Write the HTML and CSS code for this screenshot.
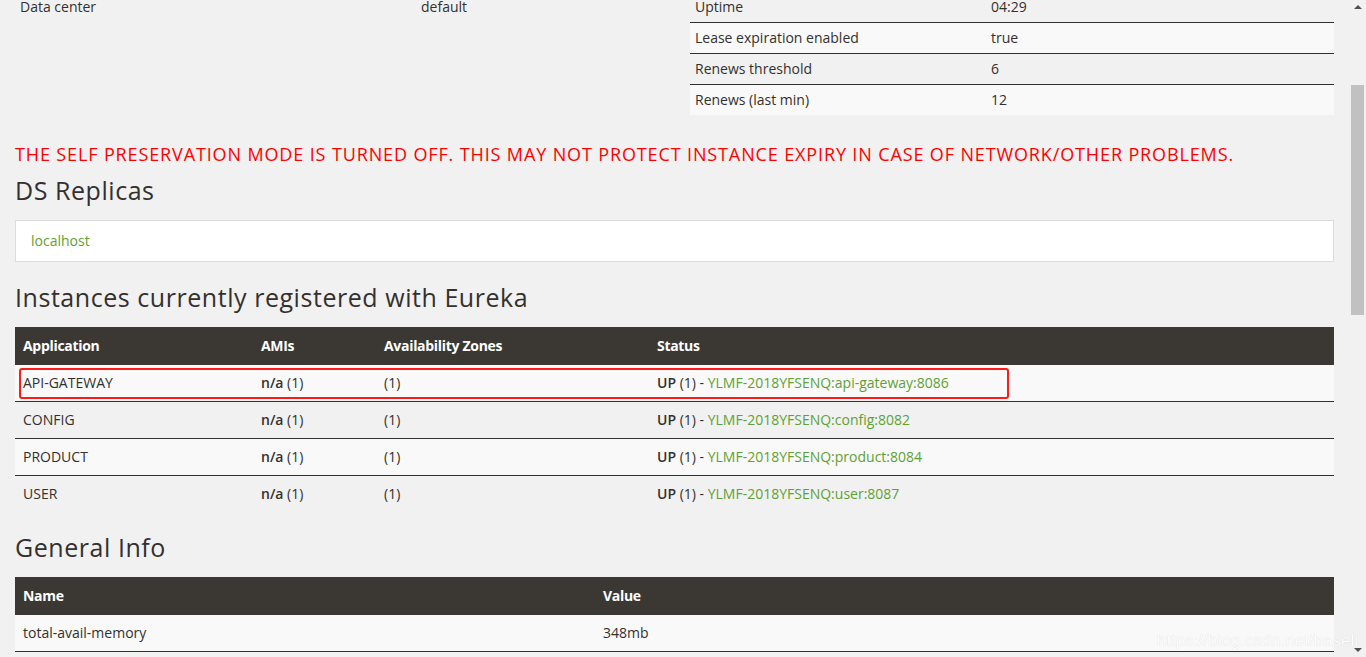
FILE: index.html
```html
<!DOCTYPE html>
<html lang="en">
<head>
<meta charset="utf-8">
<title>Eureka</title>
<link rel="stylesheet" href="styles.css">
</head>
<body>
<div class="page">
  <main class="main">
    <div class="top-row">
      <table class="info left-info">
        <tr><td class="k">Data center</td><td>default</td></tr>
      </table>
      <table class="info right-info">
        <tr class="plain"><td class="k">Uptime</td><td>04:29</td></tr>
        <tr class="alt"><td class="k">Lease expiration enabled</td><td>true</td></tr>
        <tr class="plain"><td class="k">Renews threshold</td><td>6</td></tr>
        <tr class="alt last"><td class="k">Renews (last min)</td><td>12</td></tr>
      </table>
    </div>

    <p class="warning">THE SELF PRESERVATION MODE IS TURNED OFF. THIS MAY NOT PROTECT INSTANCE EXPIRY IN CASE OF NETWORK/OTHER PROBLEMS.</p>

    <h2 class="section-title">DS Replicas</h2>
    <div class="replicas"><a class="link" href="#">localhost</a></div>

    <h2 class="section-title">Instances currently registered with Eureka</h2>
    <div class="table-wrap">
      <table class="grid instances">
        <thead>
          <tr><th class="c-app">Application</th><th class="c-ami">AMIs</th><th class="c-az">Availability Zones</th><th>Status</th></tr>
        </thead>
        <tbody>
          <tr class="alt"><td>API-GATEWAY</td><td><b>n/a</b> (1)</td><td>(1)</td><td><b>UP</b> (1) - <a class="link" href="#">YLMF-2018YFSENQ:api-gateway:8086</a></td></tr>
          <tr class="plain"><td>CONFIG</td><td><b>n/a</b> (1)</td><td>(1)</td><td><b>UP</b> (1) - <a class="link" href="#">YLMF-2018YFSENQ:config:8082</a></td></tr>
          <tr class="alt"><td>PRODUCT</td><td><b>n/a</b> (1)</td><td>(1)</td><td><b>UP</b> (1) - <a class="link" href="#">YLMF-2018YFSENQ:product:8084</a></td></tr>
          <tr class="plain"><td>USER</td><td><b>n/a</b> (1)</td><td>(1)</td><td><b>UP</b> (1) - <a class="link" href="#">YLMF-2018YFSENQ:user:8087</a></td></tr>
        </tbody>
      </table>
      <div class="highlight"></div>
    </div>

    <h2 class="section-title">General Info</h2>
    <table class="grid general">
      <thead>
        <tr><th class="c-name">Name</th><th>Value</th></tr>
      </thead>
      <tbody>
        <tr class="alt"><td>total-avail-memory</td><td>348mb</td></tr>
      </tbody>
    </table>
  </main>

  <div class="scrollbar">
    <div class="arrow up"></div>
    <div class="track"><div class="thumb"></div></div>
    <div class="arrow down"></div>
  </div>
</div>
<div class="watermark">https://blog.csdn.net/baseli</div>
</body>
</html>
```

FILE: styles.css
```css
html, body {
  margin: 0;
  padding: 0;
  height: 657px;
  overflow: hidden;
  background: #f1f1f1;
}

body {
  font-family: "Open Sans", "Noto Sans", sans-serif;
  font-size: 14px;
  color: #34302d;
}

.page {
  display: flex;
  height: 657px;
}

.main {
  flex: 1;
  padding: 0 15px;
  margin-top: -8px;
  min-width: 0;
}

.top-row {
  display: flex;
  gap: 30px;
  align-items: flex-start;
}

table {
  border-collapse: collapse;
  border-spacing: 0;
}

.info td {
  padding: 7px 5px;
  line-height: 16px;
  vertical-align: top;
}

.left-info {
  width: 645px;
}
.left-info td.k {
  width: 391px;
}

.right-info {
  flex: 1;
}
.right-info td.k {
  width: 286px;
}
.right-info tr {
  border-bottom: 1px solid #34302d;
}
.right-info tr.last {
  border-bottom: none;
}

tr.alt {
  background: #f9f9f9;
}
tr.plain {
  background: #f1f1f1;
}

.warning {
  margin: 27px 0 0;
  font-size: 18px;
  line-height: 24px;
  color: #ff0000;
  white-space: nowrap;
  letter-spacing: 0.87px;
}

.section-title {
  margin: 9px 0 0;
  font-family: "Open Sans", "Noto Sans", sans-serif;
  font-weight: 400;
  font-size: 25px;
  line-height: 30px;
  color: #34302d;
  letter-spacing: 0.55px;
}

.replicas {
  margin-top: 15px;
  background: #fff;
  border: 1px solid #dcdcdc;
  padding: 12px 15px;
  line-height: 16px;
}

.replicas + .section-title {
  margin-top: 20px;
}

.link {
  color: #5fa134;
  text-decoration: none;
}

.table-wrap {
  position: relative;
  margin-top: 15px;
}

.grid {
  width: 100%;
  table-layout: fixed;
}

.grid th {
  background: #3b3833;
  color: #fff;
  text-align: left;
  font-weight: 700;
  padding: 11px 8px;
  line-height: 16px;
  letter-spacing: -0.3px;
}

.grid td {
  padding: 10px 8px;
  line-height: 16px;
  border-top: 1px solid #34302d;
}

.grid tbody tr:first-child td {
  border-top: none;
}

.grid b {
  font-weight: 600;
}

.c-app { width: 222px; }
.c-ami { width: 107px; }
.c-az { width: 257px; }

.table-wrap + .section-title {
  margin-top: 20px;
}

.general {
  margin-top: 15px;
  border-bottom: 1px solid #34302d;
}

.c-name { width: 564px; }

.highlight {
  position: absolute;
  left: 4px;
  top: 41px;
  width: 986px;
  height: 27px;
  border: 2px solid #ff1a1a;
  border-radius: 3px;
}

.scrollbar {
  width: 17px;
  flex: none;
  background: #f1f1f1;
  display: flex;
  flex-direction: column;
  align-items: center;
}

.arrow {
  width: 0;
  height: 0;
  border-left: 4px solid transparent;
  border-right: 4px solid transparent;
  flex: none;
}
.arrow.up {
  margin-top: 5px;
  border-bottom: 4px solid #505050;
}
.arrow.down {
  margin-bottom: 5px;
  border-top: 4px solid #505050;
}

.track {
  flex: 1;
  width: 100%;
  display: flex;
  justify-content: center;
}

.thumb {
  margin-top: 76px;
  width: 13px;
  height: 230px;
  background: #c1c1c1;
}

.watermark {
  position: fixed;
  right: 8px;
  bottom: 6px;
  font-family: "Liberation Sans", Arial, sans-serif;
  font-size: 17px;
  color: rgba(255, 255, 255, 0.9);
  text-shadow: 0 0 1px rgba(0, 0, 0, 0.18);
}
```
